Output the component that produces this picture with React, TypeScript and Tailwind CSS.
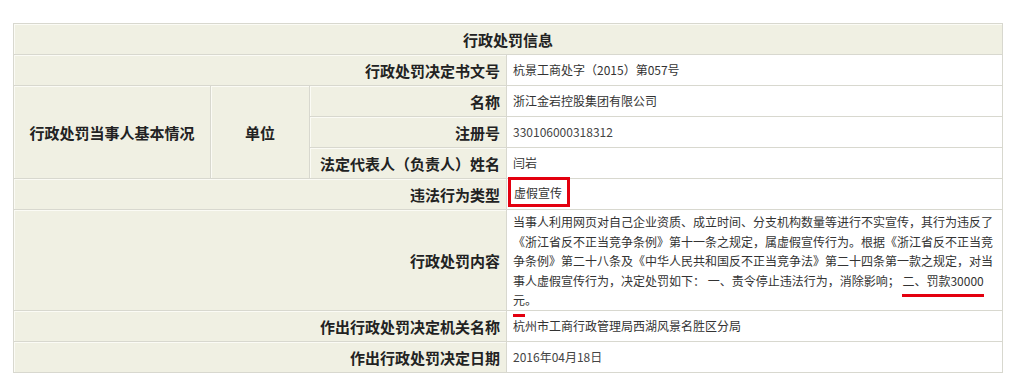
import type { ReactNode } from "react";

const FONT = "font-['SimSun','Noto_Sans_CJK_SC',sans-serif]";

type CellProps = {
  children?: ReactNode;
  className?: string;
  rowSpan?: number;
  colSpan?: number;
  center?: boolean;
};

function Label({ children, className = "", center, ...rest }: CellProps) {
  return (
    <td
      {...rest}
      className={`border border-[#d8d8cf] bg-[#f0f0e3] px-[6px] text-[15px] font-bold leading-none text-[#222] shadow-[inset_1px_1px_0_#fbfbf5] ${center ? "text-center" : "text-right"} ${className}`}
    >
      {children}
    </td>
  );
}

// className carries padding / leading so nothing fights over the same property
function Value({ children, className = "px-[6px] leading-none" }: { children?: ReactNode; className?: string }) {
  return <td className={`border border-[#d8d8cf] bg-white text-[12px] text-[#333] ${className}`}>{children}</td>;
}

export default function App() {
  return (
    <div className={`min-h-[374px] bg-white pl-[13px] pt-[23px] ${FONT}`}>
      <table className="w-[990px] table-fixed border-collapse">
        <colgroup>
          <col className="w-[197px]" />
          <col className="w-[99px]" />
          <col className="w-[197px]" />
          <col />
        </colgroup>
        <tbody>
          <tr className="h-[31px]">
            <Label colSpan={4} center>
              行政处罚信息
            </Label>
          </tr>
          <tr className="h-[31px]">
            <Label colSpan={3}>行政处罚决定书文号</Label>
            <Value>杭景工商处字（2015）第057号</Value>
          </tr>
          <tr className="h-[31px]">
            <Label rowSpan={3} center>
              行政处罚当事人基本情况
            </Label>
            <Label rowSpan={3} center>
              单位
            </Label>
            <Label>名称</Label>
            <Value>浙江金岩控股集团有限公司</Value>
          </tr>
          <tr className="h-[31px]">
            <Label>注册号</Label>
            <Value className="px-[6px] text-[11px] leading-none text-[#444]">330106000318312</Value>
          </tr>
          <tr className="h-[31px]">
            <Label>法定代表人（负责人）姓名</Label>
            <Value>闫岩</Value>
          </tr>
          <tr className="h-[31px]">
            <Label colSpan={3}>违法行为类型</Label>
            <Value className="p-0 leading-none">
              {/* red annotation box, drawn slightly over the row above */}
              <div className="relative -top-[2px] ml-[1px] flex h-[30px] w-[62px] items-center border-[3px] border-[#e3000f] pl-[3px] pt-[2px]">
                虚假宣传
              </div>
            </Value>
          </tr>
          <tr className="h-[101px]">
            <Label colSpan={3}>行政处罚内容</Label>
            <Value className="px-[6px] pb-0 pt-[2px] leading-[19.5px]">
              当事人利用网页对自己企业资质、成立时间、分支机构数量等进行不实宣传，其行为违反了《浙江省反不正当竞争条例》第十一条之规定，属虚假宣传行为。根据《浙江省反不正当竞争条例》第二十八条及《中华人民共和国反不正当竞争法》第二十四条第一款之规定，对当事人虚假宣传行为，决定处罚如下： 一、责令停止违法行为，消除影响；{" "}
              <span className="border-b-[3px] border-[#e3000f] pb-[5px]">二、罚款30000</span>
              <span className="border-b-[3px] border-[#e3000f] pb-[6px]">元</span>。
            </Value>
          </tr>
          <tr className="h-[31px]">
            <Label colSpan={3}>作出行政处罚决定机关名称</Label>
            <Value>杭州市工商行政管理局西湖风景名胜区分局</Value>
          </tr>
          <tr className="h-[31px]">
            <Label colSpan={3}>作出行政处罚决定日期</Label>
            <Value className="px-[6px] text-[11px] leading-none text-[#444]">2016年04月18日</Value>
          </tr>
        </tbody>
      </table>
    </div>
  );
}
